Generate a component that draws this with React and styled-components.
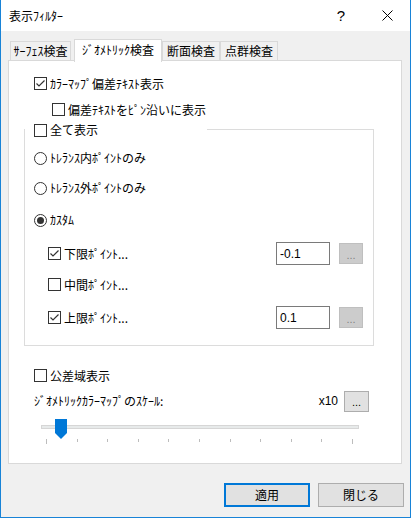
import React from 'react';
import styled, { createGlobalStyle } from 'styled-components';

const GlobalStyle = createGlobalStyle`
  html, body {
    margin: 0;
    padding: 0;
    background: #f0f0f0;
  }
  body {
    font-family: "Noto Sans CJK JP", "Noto Sans", sans-serif;
    font-size: 12px;
    color: #000;
  }
`;

const Window = styled.div`
  width: 411px;
  height: 518px;
  box-sizing: border-box;
  border: 1px solid #1883d7;
  border-top: none;
  background: #f0f0f0;
  display: flex;
  flex-direction: column;
`;

const TitleBar = styled.div`
  height: 31px;
  background: #fff;
  display: flex;
  align-items: center;
  padding-left: 8px;
`;

const TitleText = styled.div`
  flex: 1;
  font-size: 12px;
  line-height: 1;
`;

const Caption = styled.div`
  width: 46px;
  height: 31px;
  display: flex;
  align-items: center;
  justify-content: center;
  font-family: "Liberation Sans", sans-serif;
  font-size: 15px;
`;

const Body = styled.div`
  padding: 8px 8px 0 7px;
`;

const TabRow = styled.div`
  display: flex;
  align-items: flex-end;
  padding-left: 2px;
  height: 22px;
`;

const Tab = styled.div`
  box-sizing: border-box;
  width: ${p => p.$w}px;
  margin-left: ${p => p.$ml || 0}px;
  height: ${p => (p.$active ? 23 : 20)}px;
  margin-bottom: ${p => (p.$active ? -1 : 0)}px;
  background: ${p => (p.$active ? '#fff' : '#f0f0f0')};
  border: 1px solid #d9d9d9;
  border-bottom: ${p => (p.$active ? 'none' : '1px solid #d9d9d9')};
  position: relative;
  z-index: ${p => (p.$active ? 2 : 1)};
  display: flex;
  align-items: center;
  justify-content: center;
  padding-bottom: ${p => (p.$active ? 2 : 0)}px;
  line-height: 1;
  white-space: nowrap;
`;

const Panel = styled.div`
  box-sizing: border-box;
  height: 404px;
  margin-top: -1px;
  border: 1px solid #d9d9d9;
  background: #fff;
  padding: 10px 27px 0 15px;
`;

const Row = styled.div`
  display: flex;
  align-items: center;
  height: ${p => p.$h}px;
  padding-left: ${p => p.$indent || 0}px;
  padding-right: ${p => p.$right || 0}px;
  margin-top: ${p => p.$mt || 0}px;
  line-height: 1;
  white-space: nowrap;
`;

const Box = styled.span`
  box-sizing: border-box;
  width: 13px;
  height: 13px;
  flex: none;
  border: 1px solid #333;
  background: #fff;
  display: inline-flex;
  align-items: center;
  justify-content: center;
`;

const Circle = styled(Box)`
  border-radius: 50%;
`;

const Dot = styled.span`
  width: 7px;
  height: 7px;
  border-radius: 50%;
  background: #333;
`;

const Label = styled.span`
  margin-left: ${p => (p.$flush ? 0 : 3)}px;
  flex: ${p => (p.$grow ? 1 : 'none')};
`;

/* group box: head row (corner, title, rule) + open-topped frame */
const Group = styled.div`
  width: 350px;
`;

const GroupHead = styled.div`
  display: flex;
  height: 14px;
`;

const Corner = styled.span`
  align-self: flex-end;
  height: 8px;
  border-left: 1px solid #dcdcdc;
`;

const GroupTitle = styled.div`
  box-sizing: border-box;
  width: 182px;
  padding-left: 9px;
  display: flex;
  align-items: center;
  line-height: 1;
`;

const Rule = styled.span`
  flex: 1;
  align-self: flex-end;
  box-sizing: border-box;
  height: 8px;
  border-top: 1px solid #dcdcdc;
  border-right: 1px solid #dcdcdc;
`;

const Frame = styled.div`
  border: 1px solid #dcdcdc;
  border-top: none;
  padding: 6px 10px 9px 9px;
`;

const NumInput = styled.div`
  box-sizing: border-box;
  width: 54px;
  height: 23px;
  border: 1px solid #7a7a7a;
  background: #fff;
  display: flex;
  align-items: center;
  padding-left: 3px;
  font-family: "Liberation Sans", sans-serif;
  font-size: 12px;
`;

const DotsBtn = styled.div`
  box-sizing: border-box;
  width: ${p => p.$w || 24}px;
  height: 21px;
  margin-left: ${p => p.$ml || 9}px;
  background: ${p => (p.$disabled ? '#cccccc' : '#e1e1e1')};
  border: 1px solid ${p => (p.$disabled ? '#bfbfbf' : '#adadad')};
  color: ${p => (p.$disabled ? '#838383' : '#000')};
  display: flex;
  align-items: center;
  justify-content: center;
  padding-top: 3px;
  font-family: "Liberation Sans", sans-serif;
  font-size: 11px;
`;

const Scale = styled.span`
  font-family: "Liberation Sans", sans-serif;
  font-size: 12px;
`;

const SliderWrap = styled.div`
  padding-left: 17px;
  padding-top: 11px;
`;

const Track = styled.div`
  position: relative;
  box-sizing: border-box;
  width: 318px;
  height: 4px;
  background: #e7eaea;
  border: 1px solid #d6d6d6;
`;

const Thumb = styled.svg`
  position: absolute;
  left: 13px;
  top: -7px;
`;

const Ticks = styled.div`
  display: flex;
  justify-content: space-between;
  align-items: flex-start;
  width: 307px;
  margin: 10px 0 0 5px;
`;

const Tick = styled.span`
  width: 1px;
  height: ${p => (p.$end ? 5 : 3)}px;
  background: #bdbdbd;
`;

const Footer = styled.div`
  display: flex;
  justify-content: flex-end;
  gap: 8px;
  padding: 19px 6px 0 0;
`;

const DlgButton = styled.div`
  box-sizing: border-box;
  width: 86px;
  height: 24px;
  background: #e1e1e1;
  border: ${p => (p.$default ? '2px solid #0078d7' : '1px solid #adadad')};
  display: flex;
  align-items: center;
  justify-content: center;
  line-height: 1;
`;

const Check = ({ on }) => (
  <Box>
    {on && (
      <svg width="11" height="11" viewBox="0 0 11 11">
        <path d="M1.5 5.5 L4 8 L9.5 2.5" fill="none" stroke="#333" strokeWidth="1.2" />
      </svg>
    )}
  </Box>
);

const Radio = ({ on }) => <Circle>{on && <Dot />}</Circle>;

const PointRow = ({ h, on, label, value }) => (
  <Row $h={h} $indent={14}>
    <Check on={on} />
    <Label $grow>{label}</Label>
    {value !== undefined && (
      <>
        <NumInput>{value}</NumInput>
        <DotsBtn $disabled>...</DotsBtn>
      </>
    )}
  </Row>
);

const tabs = [
  { label: 'ｻｰﾌｪｽ検査', w: 61 },
  { label: 'ｼﾞｵﾒﾄﾘｯｸ検査', w: 88, ml: 3, active: true },
  { label: '断面検査', w: 58 },
  { label: '点群検査', w: 58 },
];

export default function App() {
  return (
    <>
      <GlobalStyle />
      <Window>
        <TitleBar>
          <TitleText>表示ﾌｨﾙﾀｰ</TitleText>
          <Caption>?</Caption>
          <Caption>
            <svg width="11" height="11" viewBox="0 0 11 11">
              <path d="M0.5 0.5 L10.5 10.5 M10.5 0.5 L0.5 10.5" stroke="#000" strokeWidth="1" />
            </svg>
          </Caption>
        </TitleBar>
        <Body>
          <TabRow>
            {tabs.map(t => (
              <Tab key={t.label} $w={t.w} $ml={t.ml} $active={t.active}>
                {t.label}
              </Tab>
            ))}
          </TabRow>
          <Panel>
            <Row $h={25} $indent={10}>
              <Check on />
              <Label>ｶﾗｰﾏｯﾌﾟ偏差ﾃｷｽﾄ表示</Label>
            </Row>
            <Row $h={27} $indent={28}>
              <Check />
              <Label>偏差ﾃｷｽﾄをﾋﾟﾝ沿いに表示</Label>
            </Row>
            <Group>
              <GroupHead>
                <Corner />
                <GroupTitle>
                  <Check />
                  <Label>全て表示</Label>
                </GroupTitle>
                <Rule />
              </GroupHead>
              <Frame>
                <Row $h={30}>
                  <Radio />
                  <Label>ﾄﾚﾗﾝｽ内ﾎﾟｲﾝﾄのみ</Label>
                </Row>
                <Row $h={30}>
                  <Radio />
                  <Label>ﾄﾚﾗﾝｽ外ﾎﾟｲﾝﾄのみ</Label>
                </Row>
                <Row $h={34}>
                  <Radio on />
                  <Label>ｶｽﾀﾑ</Label>
                </Row>
                <PointRow h={33} on label="下限ﾎﾟｲﾝﾄ..." value="-0.1" />
                <PointRow h={29} label="中間ﾎﾟｲﾝﾄ..." />
                <PointRow h={37} on label="上限ﾎﾟｲﾝﾄ..." value="0.1" />
              </Frame>
            </Group>
            <Row $h={25} $indent={10} $mt={17}>
              <Check />
              <Label>公差域表示</Label>
            </Row>
            <Row $h={26} $indent={10} $right={5}>
              <Label $grow $flush>ｼﾞｵﾒﾄﾘｯｸｶﾗｰﾏｯﾌﾟのｽｹｰﾙ:</Label>
              <Scale>x10</Scale>
              <DotsBtn $w={25} $ml={6}>...</DotsBtn>
            </Row>
            <SliderWrap>
              <Track>
                <Thumb width="12" height="20" viewBox="0 0 12 20">
                  <path d="M0 0 H12 V14 L6 20 L0 14 Z" fill="#0078d7" />
                </Thumb>
              </Track>
              <Ticks>
                {Array.from({ length: 11 }, (_, i) => (
                  <Tick key={i} $end={i === 0 || i === 10} />
                ))}
              </Ticks>
            </SliderWrap>
          </Panel>
        </Body>
        <Footer>
          <DlgButton $default>適用</DlgButton>
          <DlgButton>閉じる</DlgButton>
        </Footer>
      </Window>
    </>
  );
}
